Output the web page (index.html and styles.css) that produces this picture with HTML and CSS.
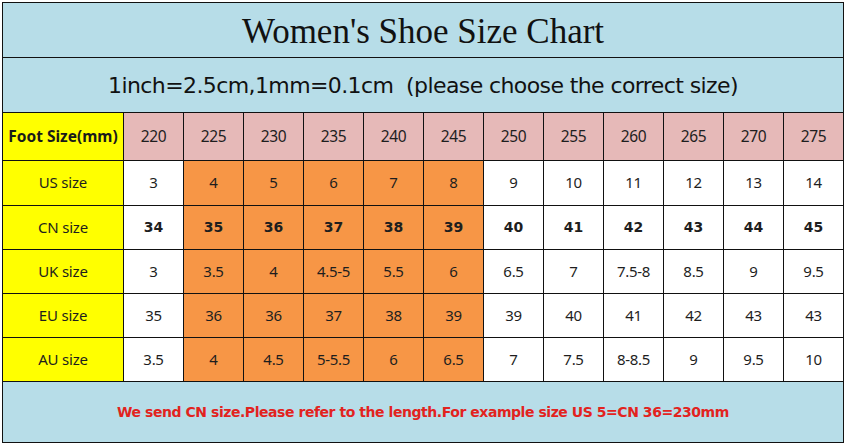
FILE: index.html
```html
<!DOCTYPE html>
<html>
<head>
<meta charset="utf-8">
<link rel="stylesheet" href="styles.css">
</head>
<body>
<div class="chart">
  <div class="title">Women's Shoe Size Chart</div>
  <div class="subtitle">1inch=2.5cm,1mm=0.1cm&nbsp;&nbsp;(please choose the correct size)</div>

  <div class="label head">Foot Size(mm)</div>
  <div class="c pink">220</div><div class="c pink">225</div><div class="c pink">230</div><div class="c pink">235</div><div class="c pink">240</div><div class="c pink">245</div><div class="c pink">250</div><div class="c pink">255</div><div class="c pink">260</div><div class="c pink">265</div><div class="c pink">270</div><div class="c pink">275</div>

  <div class="label">US size</div>
  <div class="c">3</div><div class="c o">4</div><div class="c o">5</div><div class="c o">6</div><div class="c o">7</div><div class="c o">8</div><div class="c">9</div><div class="c">10</div><div class="c">11</div><div class="c">12</div><div class="c">13</div><div class="c">14</div>

  <div class="label">CN size</div>
  <div class="c b">34</div><div class="c o b">35</div><div class="c o b">36</div><div class="c o b">37</div><div class="c o b">38</div><div class="c o b">39</div><div class="c b">40</div><div class="c b">41</div><div class="c b">42</div><div class="c b">43</div><div class="c b">44</div><div class="c b">45</div>

  <div class="label">UK size</div>
  <div class="c">3</div><div class="c o">3.5</div><div class="c o">4</div><div class="c o">4.5-5</div><div class="c o">5.5</div><div class="c o">6</div><div class="c">6.5</div><div class="c">7</div><div class="c">7.5-8</div><div class="c">8.5</div><div class="c">9</div><div class="c">9.5</div>

  <div class="label">EU size</div>
  <div class="c">35</div><div class="c o">36</div><div class="c o">36</div><div class="c o">37</div><div class="c o">38</div><div class="c o">39</div><div class="c">39</div><div class="c">40</div><div class="c">41</div><div class="c">42</div><div class="c">43</div><div class="c">43</div>

  <div class="label">AU size</div>
  <div class="c">3.5</div><div class="c o">4</div><div class="c o">4.5</div><div class="c o">5-5.5</div><div class="c o">6</div><div class="c o">6.5</div><div class="c">7</div><div class="c">7.5</div><div class="c">8-8.5</div><div class="c">9</div><div class="c">9.5</div><div class="c">10</div>

  <div class="footer">We send CN size.Please refer to the length.For example size US 5=CN 36=230mm</div>
</div>
</body>
</html>
```

FILE: styles.css
```css
html, body {
  margin: 0;
  padding: 0;
  background: #ffffff;
}

body {
  padding: 2px 0 0 2px;
}

.chart {
  display: grid;
  grid-template-columns: 120px repeat(12, 59px);
  grid-template-rows: 54px 54px 47px 44px 43px 43px 43px 43px 60px;
  gap: 1px;
  padding: 1px;
  background: #111111;
  width: max-content;
  font-family: "Noto Sans", "DejaVu Sans", sans-serif;
  color: #1e1e1e;
}

.chart > div {
  display: flex;
  align-items: center;
  justify-content: center;
  background: #ffffff;
}

.title {
  grid-column: 1 / -1;
  background: #b7dde8 !important;
  font-family: "Liberation Serif", "Times New Roman", serif;
  font-size: 35px;
  color: #111111;
  padding-top: 3px;
}

.subtitle {
  grid-column: 1 / -1;
  background: #b7dde8 !important;
  font-family: "DejaVu Sans", Verdana, sans-serif;
  font-size: 22px;
  color: #111111;
  letter-spacing: -0.6px;
}

.label {
  background: #ffff00 !important;
  font-size: 15px;
  letter-spacing: -0.2px;
  padding-bottom: 2px;
}

.label.head {
  font-weight: bold;
  font-size: 15.5px;
  letter-spacing: 0;
  color: #1a1a1a;
}

.c {
  font-size: 15px;
  letter-spacing: -0.3px;
  padding-bottom: 2px;
}

.pink {
  background: #e6b9b8 !important;
  font-size: 15.5px;
}

.o {
  background: #f79646 !important;
}

.b {
  font-family: "DejaVu Sans", Verdana, sans-serif;
  font-weight: bold;
  font-size: 14px;
  letter-spacing: 0;
  padding-bottom: 1px;
}

.footer {
  grid-column: 1 / -1;
  background: #b7dde8 !important;
  color: #e2231e;
  font-family: "DejaVu Sans", Verdana, sans-serif;
  font-weight: bold;
  font-size: 14px;
  letter-spacing: -0.45px;
}
```
